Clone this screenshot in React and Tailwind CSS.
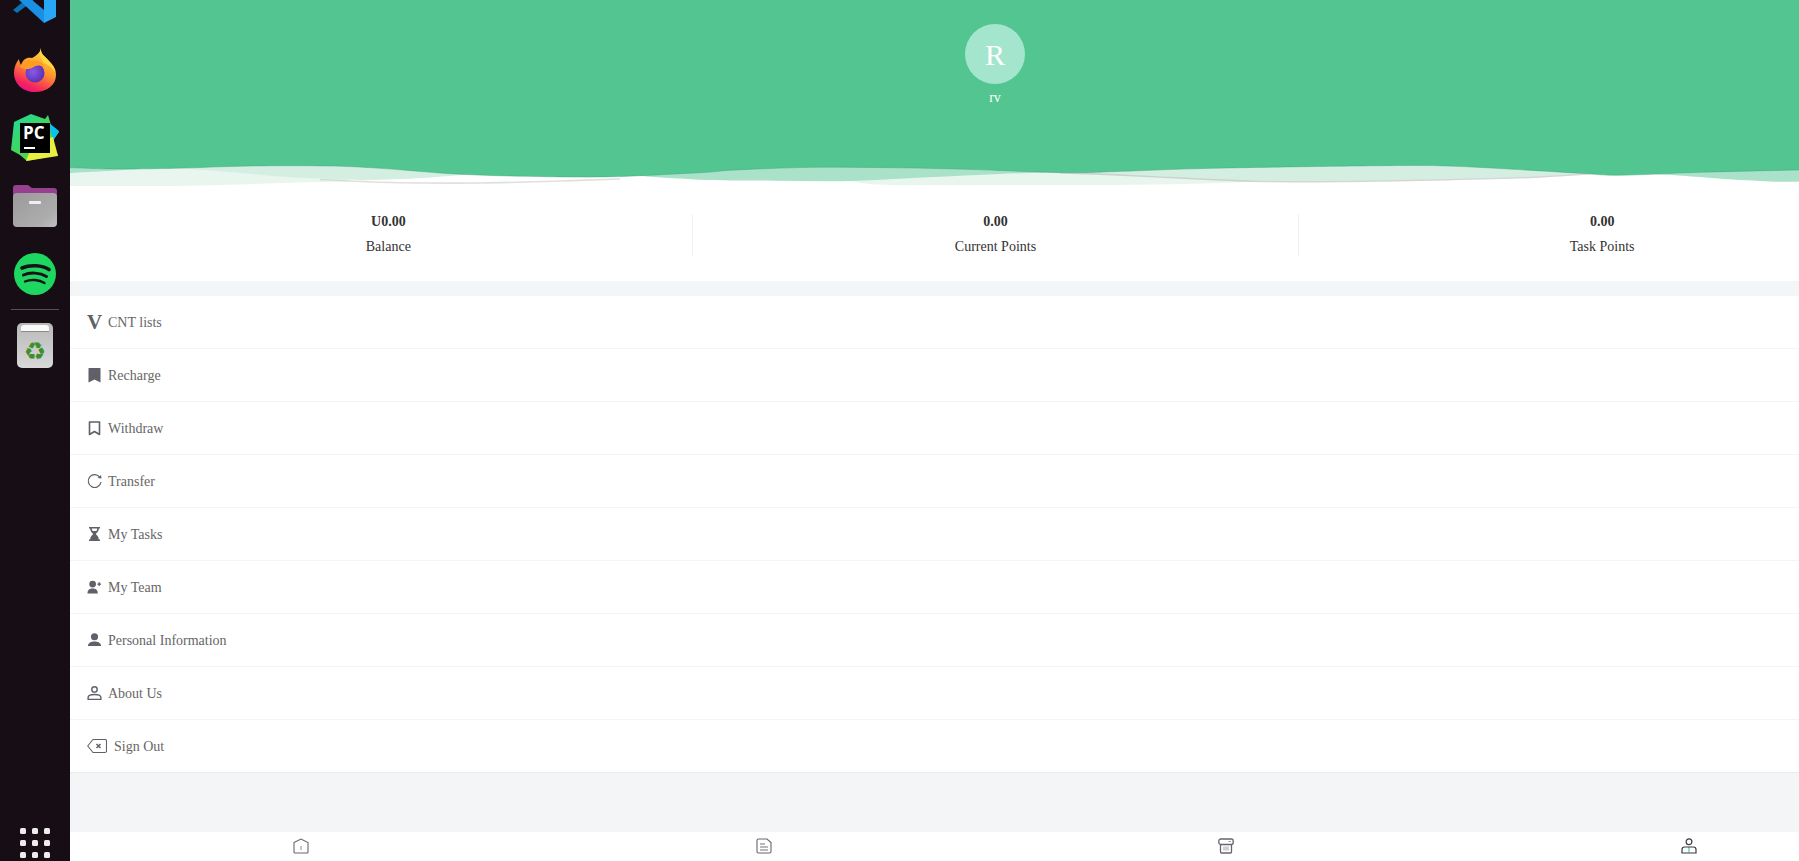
const smooth = (pts) => {
  // catmull-rom through the traced points, gives the wave edges
  let d = `M${pts[0][0]} ${pts[0][1]}`;
  for (let i = 0; i < pts.length - 1; i++) {
    const p0 = pts[i - 1] || pts[i];
    const p1 = pts[i];
    const p2 = pts[i + 1];
    const p3 = pts[i + 2] || p2;
    const c1x = p1[0] + (p2[0] - p0[0]) / 6;
    const c1y = p1[1] + (p2[1] - p0[1]) / 6;
    const c2x = p2[0] - (p3[0] - p1[0]) / 6;
    const c2y = p2[1] - (p3[1] - p1[1]) / 6;
    d += ` C${c1x} ${c1y} ${c2x} ${c2y} ${p2[0]} ${p2[1]}`;
  }
  return d;
};

const greenEdge = [[70, 167.7], [117, 169], [175, 168.3], [251, 166], [328, 166], [380, 168.3], [460, 174.3], [547, 176.7], [613, 176.7], [700, 172.7], [736, 170], [813, 167.3], [890, 167.7], [966, 169.3], [1062, 172.7], [1113, 171.7], [1213, 168.3], [1380, 165.7], [1447, 166], [1513, 169.3], [1580, 173.3], [1620, 175.3], [1700, 172.3], [1799, 170], [1920, 168]];
const mintLeft = [[175, 168], [230, 172], [280, 176.5], [340, 179.5], [375, 180], [430, 177.5], [475, 174]];
const mintRight = [[1060, 172], [1113, 174], [1180, 177.3], [1263, 180.7], [1347, 180.7], [1447, 179], [1530, 176.7], [1590, 173]];
const shadowLeft = [[320, 179.5], [345, 180.8], [400, 182.7], [480, 183], [560, 181], [620, 179]];
const medLeft = [[70, 173], [117, 170.5], [140, 169]];
const medRight = [[640, 176], [700, 179.7], [775, 180.7], [851, 181], [928, 177.3], [1000, 174], [1062, 172]];
const medFar = [[1640, 174], [1672, 175], [1741, 180], [1799, 181.7], [1920, 178]];

const Waves = () => (
  <svg className="absolute left-0 bottom-0" width="1850" height="36" viewBox="70 150 1850 36">
    <rect x="70" y="150" width="1850" height="36" fill="#ffffff" />
    <path d={`${smooth([[70, 186.7], [200, 185.5], [300, 182.5], [347, 181.5]])} L347 165 L70 165 Z`} fill="#e9f6f0" />
    <path d={`${smooth([[851, 181], [890, 185], [1043, 185], [1137, 184.7], [1230, 182.7], [1263, 180]])} L1263 165 L851 165 Z`} fill="#e9f6f0" />
    <path d={smooth(shadowLeft)} fill="none" stroke="#c4c4c4" strokeWidth="1.6" opacity="0.55" />
    <path d={smooth(mintRight)} fill="none" stroke="#b4b4b4" strokeWidth="3" opacity="0.55" />
    <path d={`${smooth(mintLeft)} L475 160 L175 160 Z`} fill="#d4efe2" />
    <path d={`${smooth(mintRight)} L1590 160 L1060 160 Z`} fill="#d4efe2" />
    <path d={`${smooth(medLeft)} L140 160 L70 160 Z`} fill="#a9e2c9" />
    <path d={`${smooth(medRight)} L1062 160 L640 160 Z`} fill="#a9e2c9" />
    <path d={`${smooth(medFar)} L1920 160 L1640 160 Z`} fill="#a9e2c9" />
    <path d={`${smooth(greenEdge)} L1920 150 L70 150 Z`} fill="#52c591" />
    <path d={smooth(greenEdge)} fill="none" stroke="#3f9f76" strokeWidth="0.8" opacity="0.5" />
  </svg>
);

const VSCodeIcon = () => (
  <svg width="44" height="23" viewBox="0 0 44 23" className="shrink-0">
    <path d="M0 10 L4 13 L20 1 L20 -4 L17 -4 Z" fill="#0d6fb5" />
    <path d="M6 0 L19 0 L31 10 L31 23 Z" fill="#1a8fe3" />
    <path d="M31 -5 L43 0 L43 17 L31 23 Z" fill="#27a7f5" />
  </svg>
);

const FirefoxIcon = () => (
  <svg width="42" height="44" viewBox="0 0 42 44" className="shrink-0">
    <defs>
      <linearGradient id="ffA" x1="0.75" y1="0" x2="0.3" y2="1">
        <stop offset="0" stopColor="#ffe14d" />
        <stop offset="0.45" stopColor="#ff9a2a" />
        <stop offset="0.85" stopColor="#f5245e" />
        <stop offset="1" stopColor="#e31587" />
      </linearGradient>
      <radialGradient id="ffB" cx="0.4" cy="0.45" r="0.6">
        <stop offset="0" stopColor="#8a5ae8" />
        <stop offset="1" stopColor="#5b2fb0" />
      </radialGradient>
    </defs>
    <path d="M27 0 C26 6 31 8 35 13 C40 18 42 21 42 27 C42 37 33 44 21 44 C9 44 0 36 0 25 C0 19 2 15 5 11 C5 13 6 15 7 17 C9 11 13 9 18 10 C23 7 26 5 27 0 Z" fill="url(#ffA)" />
    <path d="M27 0 C26 6 31 8 35 13 C39 17 41 21 41 25 C39 20 35 17 30 15 C27 11 25 6 27 0 Z" fill="#ffd83a" />
    <circle cx="21" cy="25" r="9.5" fill="url(#ffB)" />
    <path d="M6 19 C9 13 13 11 18 13 C24 11 30 14 31 21 C27 16 22 17 18 20 C14 22 9 21 6 19 Z" fill="#ff9c24" />
  </svg>
);

const PyCharmIcon = () => (
  <div className="relative w-[48px] h-[50px] shrink-0">
    <svg width="48" height="50" viewBox="0 0 48 50" className="absolute inset-0">
      <defs>
        <linearGradient id="pcA" x1="0" y1="0" x2="1" y2="1">
          <stop offset="0" stopColor="#1fd8a0" />
          <stop offset="0.6" stopColor="#4bd64a" />
          <stop offset="1" stopColor="#c9e83a" />
        </linearGradient>
      </defs>
      <polygon points="3,9 20,1 34,6 37,2 40,12 48,19 40,30 47,42 16,48 9,42 0,37" fill="url(#pcA)" />
      <polygon points="38,10 48,18 42,28" fill="#07c3f2" />
      <polygon points="15,48 47,43 42,24 22,30" fill="#e8f03f" />
    </svg>
    <div className="absolute left-[9px] top-[10px] w-[30px] h-[30px] bg-black">
      <span className="absolute left-[3px] top-[0px] text-white text-[17px] leading-[20px] font-bold font-['Open_Sans',sans-serif]">PC</span>
      <span className="absolute left-[4px] bottom-[4px] w-[11px] h-[2px] bg-white"></span>
    </div>
  </div>
);

const FolderIcon = () => (
  <svg width="44" height="42" viewBox="0 0 44 42" className="shrink-0">
    <defs>
      <linearGradient id="fdA" x1="0" y1="0" x2="1" y2="1">
        <stop offset="0" stopColor="#9a9a9a" />
        <stop offset="0.75" stopColor="#adadad" />
        <stop offset="1" stopColor="#c0c0c0" />
      </linearGradient>
    </defs>
    <path d="M0 3 Q0 0 3 0 L15 0 L19 3 L41 3 Q44 3 44 6 L44 14 L0 14 Z" fill="#96408f" />
    <rect x="0" y="8" width="44" height="34" rx="4" fill="url(#fdA)" />
    <rect x="16" y="16" width="12" height="3" rx="1" fill="#efefef" />
  </svg>
);

const SpotifyIcon = () => (
  <svg width="42" height="42" viewBox="0 0 42 42" className="shrink-0">
    <circle cx="21" cy="21" r="21" fill="#1ed760" />
    <path d="M8 15 C16 11.5 28 12 35 16.5" fill="none" stroke="#1a1218" strokeWidth="3.6" strokeLinecap="round" />
    <path d="M9.5 22 C16 19 26 19.5 32.5 23.5" fill="none" stroke="#1a1218" strokeWidth="3" strokeLinecap="round" />
    <path d="M11 28.5 C17 26 25 26.5 30.5 30" fill="none" stroke="#1a1218" strokeWidth="2.4" strokeLinecap="round" />
  </svg>
);

const TrashIcon = () => (
  <div className="relative w-[36px] h-[45px] shrink-0 rounded-[5px] bg-gradient-to-b from-[#b9b9b9] to-[#d8d8d8] flex justify-center">
    <div className="absolute top-[2px] left-[4px] right-[4px] h-[7px] rounded-t-[3px] bg-[#fafafa] border-b border-[#8a8a8a]"></div>
    <span className="mt-[14px] text-[#3e8f2c] text-[25px] leading-[30px] font-['DejaVu_Sans',sans-serif]">♻</span>
  </div>
);

const Dock = () => (
  <aside className="w-[70px] h-screen shrink-0 bg-[#170d14] flex flex-col items-center overflow-hidden">
    <div className="h-[23px] flex justify-center"><VSCodeIcon /></div>
    <div className="mt-[25px]"><FirefoxIcon /></div>
    <div className="mt-[21px]"><PyCharmIcon /></div>
    <div className="mt-[22px]"><FolderIcon /></div>
    <div className="mt-[26px]"><SpotifyIcon /></div>
    <div className="mt-[14px] w-[48px] h-px bg-[#55505a]"></div>
    <div className="mt-[13px]"><TrashIcon /></div>
    <div className="mt-auto mb-[3px] grid grid-cols-3 gap-[6px]">
      {[0, 1, 2, 3, 4, 5, 6, 7, 8].map((i) => (
        <span key={i} className="w-[6px] h-[6px] rounded-[1.5px] bg-[#eeeceb]"></span>
      ))}
    </div>
  </aside>
);

// menu icons, all 16 box, drawn by hand
const BookmarkFill = () => (
  <svg width="15" height="16" viewBox="0 0 15 16"><path d="M1.5 1.5 Q1.5 1 2 1 L13 1 Q13.5 1 13.5 1.5 L13.5 15.5 L7.5 12.5 L1.5 15.5 Z" fill="#5f6068" /></svg>
);
const BookmarkLine = () => (
  <svg width="15" height="16" viewBox="0 0 15 16"><path d="M2.5 2 L12.5 2 L12.5 14.5 L7.5 11.5 L2.5 14.5 Z" fill="none" stroke="#5f6068" strokeWidth="1.6" strokeLinejoin="round" /></svg>
);
const ReloadIcon = () => (
  <svg width="15" height="16" viewBox="0 0 15 16">
    <path d="M13 4.5 A6.4 6.4 0 1 0 14 9" fill="none" stroke="#5f6068" strokeWidth="1.2" />
    <path d="M10.5 5 L14.5 5.5 L14 2 Z" fill="#5f6068" />
  </svg>
);
const HourglassIcon = () => (
  <svg width="15" height="16" viewBox="0 0 15 16">
    <path d="M2 1 L13 1 L13 2.5 L11.8 2.5 C11.8 6 9 7 9 8 C9 9 11.8 10 11.8 13.5 L13 13.5 L13 15 L2 15 L2 13.5 L3.2 13.5 C3.2 10 6 9 6 8 C6 7 3.2 6 3.2 2.5 L2 2.5 Z" fill="#5f6068" />
    <path d="M4.8 2.5 L10.2 2.5 C10.2 3.6 9.8 4.4 9.4 5 L5.6 5 C5.2 4.4 4.8 3.6 4.8 2.5 Z" fill="#ffffff" />
  </svg>
);
const UserPlusIcon = () => (
  <svg width="16" height="16" viewBox="0 0 16 16">
    <circle cx="6" cy="4.8" r="3.6" fill="#5f6068" />
    <path d="M0.5 15 C0.5 10.5 3 9.5 6 9.5 C9 9.5 11.5 10.5 11.5 15 Z" fill="#5f6068" />
    <path d="M13 3 L13 7 M11 5 L15 5" stroke="#5f6068" strokeWidth="1.4" />
  </svg>
);
const UserFillIcon = () => (
  <svg width="16" height="16" viewBox="0 0 16 16">
    <circle cx="8" cy="4.5" r="3.8" fill="#5f6068" />
    <path d="M1 14.5 C1 10.8 4.5 9.5 8 9.5 C11.5 9.5 15 10.8 15 14.5 Z" fill="#5f6068" />
  </svg>
);
const UserLineIcon = () => (
  <svg width="16" height="16" viewBox="0 0 16 16" fill="none" stroke="#5f6068" strokeWidth="1.5">
    <circle cx="8" cy="4.2" r="2.9" />
    <path d="M1.2 14.8 L1.2 12.6 C1.2 10.6 4 9.6 8 9.6 C12 9.6 14.8 10.6 14.8 12.6 L14.8 14.8 Z" />
  </svg>
);
const BackspaceIcon = () => (
  <svg width="20" height="16" viewBox="0 0 20 16" fill="none" stroke="#5f6068" strokeWidth="1.1">
    <path d="M6 1.5 L18 1.5 Q19.5 1.5 19.5 3 L19.5 13 Q19.5 14.5 18 14.5 L6 14.5 L0.7 8 Z" strokeLinejoin="round" />
    <path d="M9.5 6 L13.5 10 M13.5 6 L9.5 10" strokeWidth="1.5" />
  </svg>
);

const menu = [
  { label: "CNT lists", icon: <span className="block w-[15px] text-center text-[21px] leading-[16px] font-bold text-[#5f6068]">V</span> },
  { label: "Recharge", icon: <BookmarkFill /> },
  { label: "Withdraw", icon: <BookmarkLine /> },
  { label: "Transfer", icon: <ReloadIcon /> },
  { label: "My Tasks", icon: <HourglassIcon /> },
  { label: "My Team", icon: <UserPlusIcon /> },
  { label: "Personal Information", icon: <UserFillIcon /> },
  { label: "About Us", icon: <UserLineIcon /> },
];

const stats = [
  { value: "U0.00", label: "Balance" },
  { value: "0.00", label: "Current Points" },
  { value: "0.00", label: "Task Points" },
];

const tabs = [
  <svg key="home" width="16" height="16" viewBox="0 0 16 16" fill="none">
    <path d="M1 4.5 L8 1 L15 4.5 L15 14 Q15 15 14 15 L2 15 Q1 15 1 14 Z" stroke="#66666e" strokeWidth="1.1" />
    <rect x="7" y="8" width="2" height="4" fill="#c4c4c8" />
  </svg>,
  <svg key="doc" width="16" height="16" viewBox="0 0 16 16" fill="none">
    <path d="M2.5 1 L11 1 L15 4.5 L15 13.5 Q15 15 13.5 15 L2.5 15 Q1 15 1 13.5 L1 2.5 Q1 1 2.5 1 Z" stroke="#66666e" strokeWidth="1.1" />
    <path d="M4 6 L9 6 M4 9 L12 9 M4 12 L12 12" stroke="#77777e" strokeWidth="1.1" />
  </svg>,
  <svg key="shop" width="16" height="16" viewBox="0 0 16 16" fill="none">
    <rect x="0.8" y="1" width="14.4" height="5.5" rx="2" stroke="#66666e" strokeWidth="1.3" />
    <path d="M2.5 6.5 L2.5 14 Q2.5 15 3.5 15 L12.5 15 Q13.5 15 13.5 14 L13.5 6.5" stroke="#66666e" strokeWidth="1.3" />
    <rect x="5" y="8.5" width="6" height="4" fill="#cfcfd2" />
    <path d="M10.5 3.5 L13 3.5" stroke="#9a9a9f" strokeWidth="1" />
  </svg>,
  <svg key="me" width="16" height="16" viewBox="0 0 16 16" fill="none">
    <rect x="7" y="9" width="2" height="5.5" fill="#8fe3bf" />
    <circle cx="8" cy="3.8" r="2.9" stroke="#3b3b42" strokeWidth="1.2" />
    <path d="M1 15 L1 11.5 Q1 9 3.5 9 L12.5 9 Q15 9 15 11.5 L15 15 Z" stroke="#3b3b42" strokeWidth="1.2" />
  </svg>,
];

export default function App() {
  return (
    <div className="flex h-screen overflow-hidden font-['Liberation_Serif',serif]">
      <Dock />
      <main className="flex-1 min-w-0 overflow-hidden">
        {/* page runs wider than the window, the right side gets cut off */}
        <div className="w-[1850px] h-full flex flex-col bg-[#f4f5f7]">
          <header className="relative h-[186px] shrink-0 bg-[#52c591] pt-[24px] flex flex-col items-center">
            <div className="w-[60px] h-[60px] pt-[1px] rounded-full bg-[#a4e5cd] flex items-center justify-center text-white text-[30px] leading-none">R</div>
            <p className="mt-[6px] text-white text-[14px] leading-[16px]">rv</p>
            <Waves />
          </header>

          <section className="h-[95px] shrink-0 bg-white px-[15px] pt-[28px]">
            <div className="grid grid-cols-3">
              {stats.map((s, i) => (
                <div key={s.label} className={`h-[42px] pt-[1px] text-center text-[14px] leading-[14px] text-[#333333] ${i > 0 ? "border-l border-[#f0f0f0]" : ""}`}>
                  <p className="font-bold">{s.value}</p>
                  <p className="mt-[11px]">{s.label}</p>
                </div>
              ))}
            </div>
          </section>

          <ul className="mt-[15px] bg-white">
            {menu.map((item) => (
              <li key={item.label} className="h-[53px] pl-[17px] flex items-center border-b border-[#f4f4f4] text-[14px] text-[#666666]">
                <span className="w-[15px] mr-[6px] flex justify-center">{item.icon}</span>
                {item.label}
              </li>
            ))}
            <li className="h-[53px] pl-[17px] flex items-center border-b border-[#ebebeb] text-[14px] text-[#666666]">
              <span className="w-[20px] mr-[7px] flex">
                <BackspaceIcon />
              </span>
              Sign Out
            </li>
          </ul>

          <nav className="mt-auto h-[29px] shrink-0 bg-white grid grid-cols-4">
            {tabs.map((icon, i) => (
              <div key={i} className="flex justify-center pt-[6px]">{icon}</div>
            ))}
          </nav>
        </div>
      </main>
    </div>
  );
}
